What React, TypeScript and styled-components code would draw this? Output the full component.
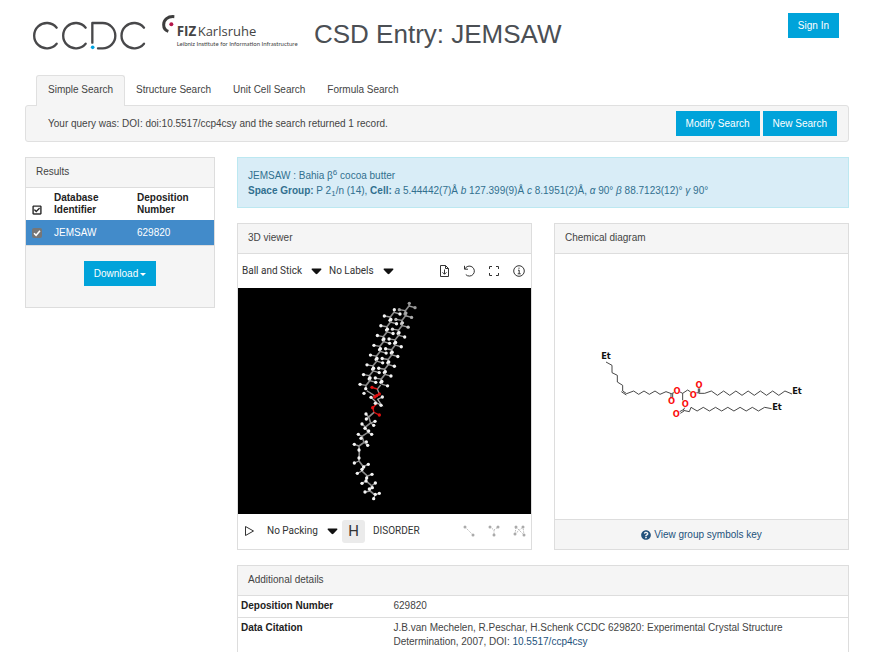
import React from "react";
import styled, { createGlobalStyle } from "styled-components";
import { FaQuestionCircle, FaRegCheckSquare } from "react-icons/fa";

const Global = createGlobalStyle`
  * { box-sizing: border-box; }
  body {
    margin: 0;
    background: #fff;
    color: #444;
    font-family: "Liberation Sans", Arial, sans-serif;
    font-size: 10px;
    line-height: 14px;
  }
  button, select, input { font: inherit; color: inherit; margin: 0; }
  svg { display: block; }
`;

const Page = styled.div`
  padding: 13px 39px 0 25px;
`;

const Header = styled.header`
  display: flex;
  align-items: flex-start;
  height: 62px;
  padding-right: 10px;
`;

const LogoLink = styled.a<{ $top: number; $left: number; $gap: number }>`
  flex: none;
  padding: ${(p) => p.$top}px 0 0 ${(p) => p.$left}px;
  margin-right: ${(p) => p.$gap}px;
`;

const Title = styled.h1`
  flex: 1;
  margin: 0;
  padding-top: 4px;
  color: #4b4f54;
  font-size: 26px;
  font-weight: 400;
  line-height: 34px;
  white-space: nowrap;
`;

const PrimaryButton = styled.button`
  display: inline-flex;
  align-items: center;
  justify-content: center;
  gap: 2px;
  height: 25px;
  padding: 0 9px;
  border: 1px solid #00a3da;
  background: #00a3da;
  color: #fff;
  white-space: nowrap;
  cursor: pointer;
`;

const Tabs = styled.nav`
  display: flex;
  padding-left: 11px;
`;

const Tab = styled.a<{ $active?: boolean }>`
  position: relative;
  height: 31px;
  margin-bottom: -1px;
  padding: 7px ${(p) => (p.$active ? 11 : 10)}px 0;
  border: 1px solid ${(p) => (p.$active ? "#e0e0e0" : "transparent")};
  border-bottom: 0;
  border-radius: 3px 3px 0 0;
  background: ${(p) => (p.$active ? "#f5f5f5" : "transparent")};
  color: #444;
  text-decoration: none;
`;

const QueryBar = styled.section`
  display: flex;
  align-items: center;
  gap: 3px;
  height: 37px;
  padding: 0 11px 0 22px;
  border: 1px solid #e0e0e0;
  border-radius: 3px;
  background: #f5f5f5;
`;

const QueryText = styled.p`
  flex: 1;
  margin: 0;
`;

const Columns = styled.div`
  display: grid;
  grid-template-columns: 190px minmax(0, 1fr);
  align-items: start;
  gap: 22px;
  margin-top: 15px;
`;

const Main = styled.main`
  display: grid;
  gap: 15px;
`;

const Panel = styled.section`
  display: flex;
  flex-direction: column;
  border: 1px solid #ddd;
  background: #fff;
`;

const PanelHead = styled.h2`
  margin: 0;
  padding: 7px 10px 8px;
  border-bottom: 1px solid #ddd;
  background: #f5f5f5;
  font-size: 10px;
  font-weight: 400;
  line-height: 14px;
`;

const ResultsTable = styled.table`
  width: 100%;
  border-collapse: collapse;
  table-layout: fixed;
  th {
    padding: 4px 2px 4px 0;
    color: #222;
    line-height: 12px;
    text-align: left;
    vertical-align: bottom;
  }
  td {
    height: 25px;
    padding: 0 2px 0 0;
    background: #428bca;
    color: #fff;
  }
  th:first-child,
  td:first-child {
    width: 28px;
    padding-left: 6px;
  }
  th:nth-child(2) {
    width: 83px;
  }
`;

const IconButton = styled.button<{ $faint?: boolean }>`
  display: grid;
  place-items: center;
  padding: 0;
  border: 0;
  background: none;
  color: ${(p) => (p.$faint ? "#aaa" : "#333")};
  cursor: pointer;
`;

const SelectAllButton = styled(IconButton)`
  padding-bottom: 1px;
  color: #111;
  svg {
    stroke: currentColor;
    stroke-width: 16px;
  }
`;

const CheckWrap = styled.label`
  display: grid;
  width: 10px;
  height: 10px;
  > * {
    grid-area: 1 / 1;
  }
`;

const CheckInput = styled.input`
  width: 10px;
  height: 10px;
  border-radius: 2px;
  background: #767676;
  appearance: none;
`;

const DownloadArea = styled.div`
  display: flex;
  justify-content: center;
  padding: 15px 0 21px;
  border-top: 1px solid #ddd;
  background: #f5f5f5;
`;

const Notice = styled.section`
  padding: 10px 10px 9px;
  border: 1px solid #bce8f1;
  background: #d9edf7;
  color: #31708f;
  line-height: 15px;
  sup,
  sub {
    font-size: 8px;
    line-height: 0;
  }
  sub {
    vertical-align: -2px;
  }
`;

const Viewers = styled.div`
  display: grid;
  grid-template-columns: repeat(2, minmax(0, 1fr));
  gap: 22px;
`;

const Toolbar = styled.div`
  display: flex;
  align-items: center;
  height: 34px;
  padding: 0 5px 0 4px;
  color: #333;
  font-family: Roboto, sans-serif;
`;

const Tools = styled.div`
  display: flex;
  gap: 11px;
  margin-left: auto;
`;

const PlaySlot = styled.div`
  display: flex;
  width: 25px;
`;

const Picker = styled.label<{ $width: number; $gap: number }>`
  display: grid;
  align-items: center;
  width: ${(p) => p.$width}px;
  margin-right: ${(p) => p.$gap}px;
  > * {
    grid-area: 1 / 1;
  }
  > svg {
    justify-self: end;
    pointer-events: none;
  }
`;

const PickerSelect = styled.select`
  width: 100%;
  padding: 0;
  border: 0;
  background: none;
  appearance: none;
`;

const Scene = styled.div`
  background: #000;
  svg {
    width: 100%;
    height: auto;
  }
`;

const Diagram = styled.div`
  flex: 1;
  svg {
    width: 100%;
    height: auto;
  }
`;

const HydrogenButton = styled.button`
  width: 23px;
  height: 23px;
  padding: 0;
  border: 0;
  border-radius: 3px;
  background: #ebebeb;
  font-size: 15px;
`;

const TextButton = styled.button`
  padding: 0;
  border: 0;
  margin-left: 8px;
  background: none;
`;

const PanelFoot = styled.footer`
  display: flex;
  justify-content: center;
  padding: 8px 0 7px;
  border-top: 1px solid #ddd;
  background: #f5f5f5;
`;

const Link = styled.a<{ $icon?: boolean }>`
  display: ${(p) => (p.$icon ? "flex" : "inline-block")};
  align-items: center;
  gap: 3px;
  color: #23527c;
  text-decoration: none;
`;

const DetailsTable = styled.table`
  width: 100%;
  border-collapse: collapse;
  th,
  td {
    padding: 3px 3px 4px;
    text-align: left;
    vertical-align: top;
  }
  tr + tr > * {
    border-top: 1px solid #ddd;
  }
  th {
    width: 25%;
    color: #222;
  }
  td {
    padding-right: 20px;
  }
`;

const CcdcLogo = () => (
  <svg width="116" height="32" viewBox="38 57 348 96" role="img" aria-label="CCDC">
    <g fill="none" stroke="#48484a" strokeWidth="7" strokeLinecap="round" strokeLinejoin="round">
      {[80, 167, 342].map((x) => (
        <path key={x} d={`M${x + 32} 83A38 38 0 1 0 ${x + 32} 131`} />
      ))}
      <path d="M219 128V69H250A38 38 0 0 1 250 145H236" />
    </g>
    <circle cx="220" cy="142" r="5.5" fill="#00a3e0" />
  </svg>
);

const FizLogo = () => (
  <svg width="138" height="36" viewBox="424 42 414 108" role="img" aria-label="FIZ Karlsruhe">
    <path d="M464 50C444 48 432 60 432 74C432 84 437 91 446 94" fill="none" stroke="#3d3d3d" strokeWidth="9" />
    <circle cx="455" cy="73" r="6" fill="#b4154a" />
    <g fill="#444" fontFamily="Open Sans, Noto Sans, sans-serif">
      <text x="471" y="109" fontSize="40" fontWeight="700">FIZ</text>
      <text x="534" y="109" fontSize="39">Karlsruhe</text>
      <text x="471" y="138" fontSize="18" fontFamily="Lato, sans-serif">
        Leibniz Institute for Information Infrastructure
      </text>
    </g>
  </svg>
);

const Caret = () => (
  <svg width="11" height="8" viewBox="0 0 11 8" aria-hidden="true">
    <path d="M1.2 1.5H9.8C10.6 1.5 10.6 2.3 10.2 2.7L6.4 6.8C5.9 7.4 5.1 7.4 4.6 6.8L.8 2.7C.4 2.3 .4 1.5 1.2 1.5Z" fill="#111" />
  </svg>
);

const toolPaths = {
  file: "M8.5 1.5H3.5V12.5H11.5V4.5ZM8.5 1.5V4.5H11.5M7.5 5.5V10M5.5 8.3L7.5 10.3L9.5 8.3",
  reset: "M2.5 1.8V5.2H6M2.8 5A5 5 0 1 1 3.8 10.6",
  full: "M2.5 5V2.5H5M9 2.5H11.5V5M11.5 9V11.5H9M5 11.5H2.5V9",
  info: "M7 1.7A5.3 5.3 0 1 0 7 12.3A5.3 5.3 0 1 0 7 1.7M6 6.2H7.2V9.8M5.7 9.8H8.7M7 3.6V4.8",
  play: "M3.5 2.5V11.5L11.5 7Z",
};

const ToolIcon = ({ name }: { name: keyof typeof toolPaths }) => (
  <svg width="14" height="14" viewBox="0 0 14 14" fill="none" stroke="currentColor" strokeWidth="1" aria-hidden="true">
    <path d={toolPaths[name]} />
  </svg>
);

type Point = [number, number];

const measures: { label: string; points: Point[]; line: string }[] = [
  { label: "Measure distance", points: [[3, 3], [11, 11]], line: "M3 3L11 11" },
  { label: "Measure angle", points: [[3, 3], [11, 3], [7, 11]], line: "M3 3L7 6L11 3M7 6V11" },
  { label: "Measure torsion", points: [[4, 3], [3, 10], [11, 3], [12, 11]], line: "M3 10L4 3L12 11M3 10L11 3L12 11" },
];

const MeasureIcon = ({ points, line }: { points: Point[]; line: string }) => (
  <svg width="14" height="14" viewBox="0 0 14 14" aria-hidden="true">
    <path d={line} fill="none" stroke="currentColor" strokeWidth="0.8" strokeDasharray="1.5 1" />
    {points.map(([x, y]) => (
      <circle key={`${x}-${y}`} cx={x} cy={y} r="1.5" fill="currentColor" />
    ))}
  </svg>
);

const toPoints = (points: Point[]) => points.map((p) => p.join(",")).join(" ");

type Atom = { at: Point; h: Point[]; shade: string };

const tail = (start: Point, step: Point, count: number, fade: boolean): Atom[] =>
  Array.from({ length: count }, (_, i) => {
    const row = Math.floor(i / 2);
    const x = start[0] + step[0] * row;
    const y = start[1] + step[1] * row;
    const shade = fade && i < 6 ? ["#999", "#999", "#aaa", "#bbb", "#ccc", "#ddd"][i] : "#f4f4f4";
    return i % 2 === 0
      ? { at: [x, y] as Point, h: [[x + 18, y + 5], [x + 1, y - 8]] as Point[], shade }
      : { at: [x - 11, y + 14] as Point, h: [[x - 29, y + 11], [x - 12, y + 24]] as Point[], shade };
  });

const lowerBackbone: Point[] = [
  [102, 367], [86, 381], [92, 399], [76, 411], [84, 427], [66, 439], [72, 457], [57, 468], [58, 487],
  [57, 505], [57, 513], [70, 530], [66, 543], [82, 558], [78, 573], [95, 587], [90, 603], [105, 615],
];

const lowerHydrogens: Point[] = [
  [78, 372], [79, 387], [105, 394], [101, 406], [66, 402], [75, 415], [95, 433], [86, 423], [55, 433],
  [63, 445], [79, 456], [83, 466], [43, 463], [57, 480], [43, 519], [57, 504], [85, 523], [71, 531],
  [52, 550], [66, 538], [96, 553], [80, 564], [66, 580], [78, 573], [106, 579], [97, 593], [75, 606],
  [88, 597], [118, 610], [101, 626], [106, 613],
];

const nearest = (p: Point) =>
  lowerBackbone.reduce((a, b) =>
    Math.hypot(a[0] - p[0], a[1] - p[1]) < Math.hypot(b[0] - p[0], b[1] - p[1]) ? a : b
  );

const Molecule = () => {
  const chains = [tail([162, 67], [-10.4, 29.3], 16, false), tail([207, 48], [-10.3, 29.3], 17, true)];
  return (
    <svg viewBox="-306 -6 879 678" role="img" aria-label="Three-dimensional model of JEMSAW">
      {chains.map((atoms, c) => (
        <g key={c}>
          <polyline points={toPoints(atoms.map((a) => a.at))} fill="none" stroke="#8a8a8a" strokeWidth="5" />
          {atoms.map((a) =>
            a.h.map((h, i) => (
              <g key={`${a.at}-${i}`}>
                <path d={`M${a.at}L${h}`} stroke="#999" strokeWidth="4" />
                <circle cx={h[0]} cy={h[1]} r="5" fill={a.shade} />
              </g>
            ))
          )}
        </g>
      ))}
      <polyline points="122,285 112,297 118,312 108,320 96,312 80,302" fill="none" stroke="#999" strokeWidth="4" />
      <path d="M112 297L96 292M118 312L104 320M112 340L98 353L102 367L118 375" fill="none" stroke="#d11" strokeWidth="4" />
      <polyline points="93,322 104,332 112,340 125,345 113,328 127,321" fill="none" stroke="#aaa" strokeWidth="4" />
      {([[93, 322], [127, 321], [123, 346], [106, 340], [72, 310]] as Point[]).map((p) => (
        <circle key={`${p}`} cx={p[0]} cy={p[1]} r="5" fill="#eee" />
      ))}
      {([[96, 292], [118, 312], [104, 321], [110, 317], [98, 353], [118, 375]] as Point[]).map((p) => (
        <circle key={`${p}`} cx={p[0]} cy={p[1]} r="5" fill="#e01010" />
      ))}
      <polyline points={toPoints(lowerBackbone)} fill="none" stroke="#8a8a8a" strokeWidth="5" />
      {lowerHydrogens.map((h) => (
        <g key={`${h}`}>
          <path d={`M${nearest(h)}L${h}`} stroke="#999" strokeWidth="4" />
          <circle cx={h[0]} cy={h[1]} r="5" fill="#f4f4f4" />
        </g>
      ))}
    </svg>
  );
};

const zigzag = (x: number, step: number, count: number, high: number, low: number): Point[] =>
  Array.from({ length: count }, (_, i) => [x + step * i, i % 2 ? low : high]);

const oxygens: Point[] = [[245, 180], [261, 151], [310, 161], [327, 132], [286, 190], [259, 218]];
const ethyls: Point[] = [[48, 46], [621, 149], [561, 198]];

const ChemicalDiagram = () => (
  <svg viewBox="-105 -261 879 795" role="img" aria-label="Chemical diagram of JEMSAW">
    <g fill="none" stroke="#333" strokeWidth="2.7">
      <polyline points="48,63 66,73 66,95 82,103 82,123 98,133 98,150 110,158 131,150 146,160 162,150 178,160 195,150 210,160 228,152 244,158" />
      <path d="M94 152L109 162M244 158L252 155M243 158V171M248 158V171M270 153L278 157L293 147L302 153M278 157V178" />
      <path d="M319 155L327 156M325 142V155M329 142V155M327 157H344" />
      <polyline points={`344,157 ${toPoints(zigzag(364, 18.4, 13, 150, 163))} 606,159`} />
      <path d="M284 200L280 207M269 212L280 206M271 217L282 210M280 208L298 212L303 199" />
      <polyline points={`${toPoints(zigzag(303, 18.4, 13, 199, 210))} 545,203`} />
    </g>
    <g fontFamily="DejaVu Sans, sans-serif" fontWeight="700" fontSize="25" textAnchor="middle">
      {oxygens.map(([x, y]) => (
        <text key={`${x}`} x={x} y={y + 9} fill="#fb0d0d">O</text>
      ))}
      {ethyls.map(([x, y]) => (
        <text key={`${x}`} x={x} y={y + 9} fill="#111">Et</text>
      ))}
    </g>
  </svg>
);

const ViewPicker = ({ label, value, width, gap }: { label: string; value: string; width: number; gap: number }) => (
  <Picker $width={width} $gap={gap}>
    <PickerSelect aria-label={label}>
      <option>{value}</option>
    </PickerSelect>
    <Caret />
  </Picker>
);

export default function App() {
  return (
    <>
      <Global />
      <Page>
        <Header>
          <LogoLink href="#ccdc" $top={6} $left={7} $gap={13}><CcdcLogo /></LogoLink>
          <LogoLink href="#fiz" $top={1} $left={0} $gap={15}><FizLogo /></LogoLink>
          <Title>CSD Entry: JEMSAW</Title>
          <PrimaryButton>Sign In</PrimaryButton>
        </Header>
        <Tabs>
          <Tab href="#simple" $active>Simple Search</Tab>
          <Tab href="#structure">Structure Search</Tab>
          <Tab href="#unit-cell">Unit Cell Search</Tab>
          <Tab href="#formula">Formula Search</Tab>
        </Tabs>
        <QueryBar>
          <QueryText>Your query was: DOI: doi:10.5517/ccp4csy and the search returned 1 record.</QueryText>
          <PrimaryButton>Modify Search</PrimaryButton>
          <PrimaryButton>New Search</PrimaryButton>
        </QueryBar>
        <Columns>
          <Panel>
            <PanelHead>Results</PanelHead>
            <ResultsTable>
              <thead>
                <tr>
                  <th>
                    <SelectAllButton aria-label="Select all"><FaRegCheckSquare size={10} /></SelectAllButton>
                  </th>
                  <th>Database<br />Identifier</th>
                  <th>Deposition<br />Number</th>
                </tr>
              </thead>
              <tbody>
                <tr>
                  <td>
                    <CheckWrap>
                      <CheckInput type="checkbox" defaultChecked aria-label="Select JEMSAW" />
                      <svg viewBox="0 0 10 10" aria-hidden="true" pointerEvents="none">
                        <path d="M2 5.2L4.1 7.3L8 2.8" fill="none" stroke="#fff" strokeWidth="1.5" />
                      </svg>
                    </CheckWrap>
                  </td>
                  <td>JEMSAW</td>
                  <td>629820</td>
                </tr>
              </tbody>
            </ResultsTable>
            <DownloadArea>
              <PrimaryButton>
                Download
                <svg width="6" height="4" viewBox="0 0 6 4" aria-hidden="true">
                  <path d="M0 1H6L3 4Z" fill="#fff" />
                </svg>
              </PrimaryButton>
            </DownloadArea>
          </Panel>
          <Main>
            <Notice>
              <div>JEMSAW : Bahia β<sup>6</sup> cocoa butter</div>
              <div>
                <strong>Space Group:</strong> P 2<sub>1</sub>/n (14), <strong>Cell:</strong> <em>a</em> 5.44442(7)Å{" "}
                <em>b</em> 127.399(9)Å <em>c</em> 8.1951(2)Å, <em>α</em> 90° <em>β</em> 88.7123(12)° <em>γ</em> 90°
              </div>
            </Notice>
            <Viewers>
              <Panel>
                <PanelHead>3D viewer</PanelHead>
                <Toolbar>
                  <ViewPicker label="Style" value="Ball and Stick" width={80} gap={7} />
                  <ViewPicker label="Labels" value="No Labels" width={65} gap={0} />
                  <Tools>
                    <IconButton aria-label="Save"><ToolIcon name="file" /></IconButton>
                    <IconButton aria-label="Reset view"><ToolIcon name="reset" /></IconButton>
                    <IconButton aria-label="Full screen"><ToolIcon name="full" /></IconButton>
                    <IconButton aria-label="Information"><ToolIcon name="info" /></IconButton>
                  </Tools>
                </Toolbar>
                <Scene><Molecule /></Scene>
                <Toolbar>
                  <PlaySlot>
                    <IconButton aria-label="Play"><ToolIcon name="play" /></IconButton>
                  </PlaySlot>
                  <ViewPicker label="Packing" value="No Packing" width={71} gap={4} />
                  <HydrogenButton aria-label="Show hydrogens">H</HydrogenButton>
                  <TextButton>DISORDER</TextButton>
                  <Tools>
                    {measures.map((m) => (
                      <IconButton key={m.label} $faint aria-label={m.label}>
                        <MeasureIcon points={m.points} line={m.line} />
                      </IconButton>
                    ))}
                  </Tools>
                </Toolbar>
              </Panel>
              <Panel>
                <PanelHead>Chemical diagram</PanelHead>
                <Diagram><ChemicalDiagram /></Diagram>
                <PanelFoot>
                  <Link href="#symbols" $icon><FaQuestionCircle size={10} />View group symbols key</Link>
                </PanelFoot>
              </Panel>
            </Viewers>
            <Panel>
              <PanelHead>Additional details</PanelHead>
              <DetailsTable>
                <tbody>
                  <tr>
                    <th scope="row">Deposition Number</th>
                    <td>629820</td>
                  </tr>
                  <tr>
                    <th scope="row">Data Citation</th>
                    <td>
                      J.B.van Mechelen, R.Peschar, H.Schenk CCDC 629820: Experimental Crystal Structure
                      Determination, 2007, DOI: <Link href="#doi">10.5517/ccp4csy</Link>
                    </td>
                  </tr>
                </tbody>
              </DetailsTable>
            </Panel>
          </Main>
        </Columns>
      </Page>
    </>
  );
}
